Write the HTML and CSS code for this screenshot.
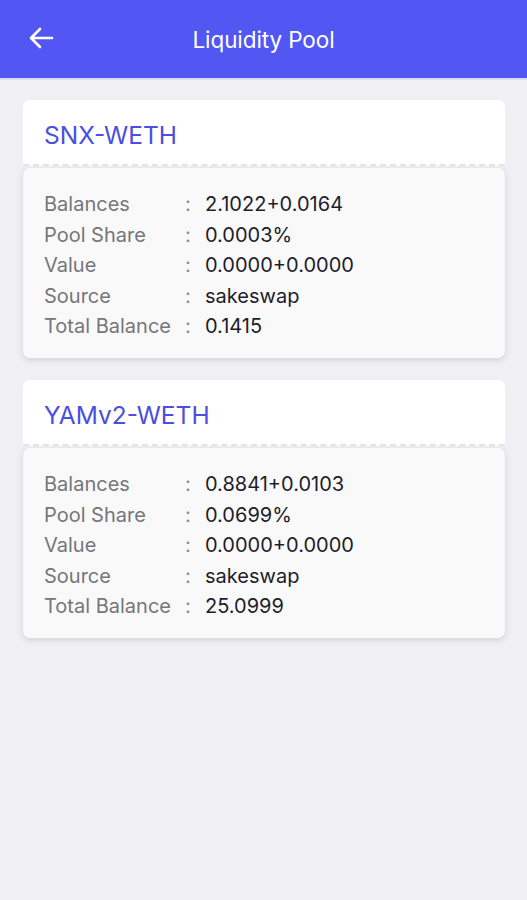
FILE: index.html
```html
<!DOCTYPE html>
<html>
<head>
    <title>Liquidity Pool</title>
    <link rel="stylesheet" href="styles.css">
</head>
<body>

<div class="topbar">
    <a class="back" href="#">
        <svg width="26" height="22" viewBox="0 0 26 22">
            <path d="M24 11H3 M12 2L3 11L12 20" fill="none" stroke="#fff" stroke-width="2.6" stroke-linecap="round" stroke-linejoin="round"/>
        </svg>
    </a>
    <h1>Liquidity Pool</h1>
</div>

<div class="content">
    <div class="pool">
        <div class="pool-head">SNX-WETH</div>
        <div class="pool-body">
            <div class="row"><span class="label">Balances</span><span class="sep">:</span><span class="val">2.1022+0.0164</span></div>
            <div class="row"><span class="label">Pool Share</span><span class="sep">:</span><span class="val">0.0003%</span></div>
            <div class="row"><span class="label">Value</span><span class="sep">:</span><span class="val">0.0000+0.0000</span></div>
            <div class="row"><span class="label">Source</span><span class="sep">:</span><span class="val">sakeswap</span></div>
            <div class="row"><span class="label">Total Balance</span><span class="sep">:</span><span class="val">0.1415</span></div>
        </div>
    </div>

    <div class="pool">
        <div class="pool-head">YAMv2-WETH</div>
        <div class="pool-body">
            <div class="row"><span class="label">Balances</span><span class="sep">:</span><span class="val">0.8841+0.0103</span></div>
            <div class="row"><span class="label">Pool Share</span><span class="sep">:</span><span class="val">0.0699%</span></div>
            <div class="row"><span class="label">Value</span><span class="sep">:</span><span class="val">0.0000+0.0000</span></div>
            <div class="row"><span class="label">Source</span><span class="sep">:</span><span class="val">sakeswap</span></div>
            <div class="row"><span class="label">Total Balance</span><span class="sep">:</span><span class="val">25.0999</span></div>
        </div>
    </div>
</div>

</body>
</html>
```

FILE: styles.css
```css
body {
    font-family: Inter, "Noto Sans", sans-serif;
    margin: 0;
    background-color: #efeff4;
    min-height: 900px;
}
.topbar {
    position: relative;
    height: 78px;
    background-color: #5257f4;
    border-bottom: 2px solid #dcdcf7;
    display: flex;
    align-items: center;
    justify-content: center;
}
.topbar h1 {
    margin: 0;
    color: #fff;
    font-size: 22.5px;
    font-weight: 400;
    letter-spacing: -0.1px;
}
.back {
    position: absolute;
    left: 28px;
    top: 27px;
    display: block;
    line-height: 0;
}
.content {
    padding: 20px 22px 0 23px;
}
.pool {
    margin-bottom: 22px;
}
.pool-head {
    background-color: #fff;
    border-radius: 7px 7px 0 0;
    height: 64px;
    line-height: 70px;
    padding-left: 21px;
    font-size: 24.5px;
    color: #4a4fdd;
    border-bottom: 2px dashed #e4e4ea;
}
.pool-body {
    margin-top: 2px;
    background-color: #f9f9fa;
    border-radius: 7px;
    box-shadow: 0 2px 6px rgba(0, 0, 0, 0.12);
    padding: 21px 21px 16px;
}
.row {
    display: grid;
    grid-template-columns: 141px 20px auto;
    font-size: 20px;
    line-height: 30.6px;
}
.label {
    color: #76767a;
}
.sep {
    color: #8a8a8e;
}
.val {
    color: #1d1d2c;
}
```
